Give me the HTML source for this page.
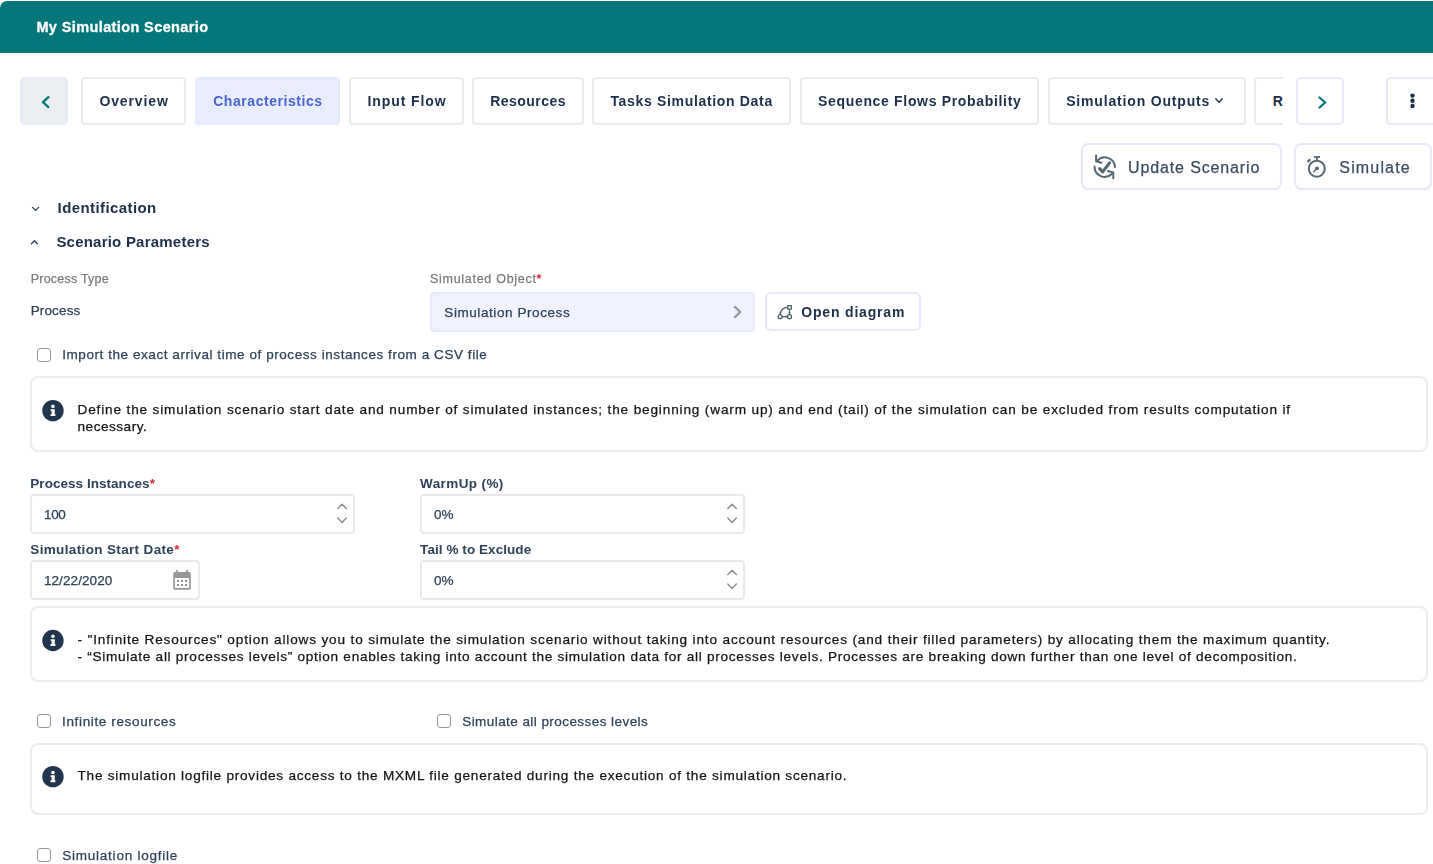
<!DOCTYPE html>
<html>
<head>
<meta charset="utf-8">
<title>My Simulation Scenario</title>
<style>
html,body{margin:0;padding:0;background:#ffffff;}
body{width:1433px;height:864px;position:relative;overflow:hidden;font-family:"Liberation Sans",sans-serif;}
.t{position:absolute;white-space:pre;line-height:1;font-family:"Liberation Sans",sans-serif;}
.b{position:absolute;box-sizing:border-box;}
.tab{position:absolute;box-sizing:border-box;top:77px;height:48px;border:2px solid #ebebeb;border-radius:4px;background:#fff;}
.info{position:absolute;box-sizing:border-box;left:30px;width:1398px;border:2px solid #ececec;border-radius:8px;background:#fff;}
.inp{position:absolute;box-sizing:border-box;border:2px solid #e9e9e9;border-radius:4px;background:#fff;}
.cb{position:absolute;box-sizing:border-box;width:14px;height:14px;border:1.7px solid #999;border-radius:3px;background:#fff;}
svg{position:absolute;overflow:visible;}
</style>
</head>
<body>
<!-- header -->
<div class="b" style="left:0;top:1px;width:1433px;height:52px;background:#057679;border-top-left-radius:7px;"></div>

<!-- tab row -->
<div class="b" style="left:20px;top:77px;width:48px;height:48px;background:#eaeef1;border:2px solid #e7eafb;border-radius:5px;"></div>
<div class="tab" style="left:81px;width:105px;"></div>
<div class="tab" style="left:195px;width:145px;background:#e9ecfc;border-color:#e6e9fb;"></div>
<div class="tab" style="left:349px;width:115px;"></div>
<div class="tab" style="left:472px;width:112px;"></div>
<div class="tab" style="left:592px;width:199px;"></div>
<div class="tab" style="left:800px;width:239px;"></div>
<div class="tab" style="left:1048px;width:198px;"></div>
<div style="position:absolute;left:1254px;top:77px;width:29px;height:48px;overflow:hidden;">
  <div class="tab" style="left:0;top:0;width:80px;"></div>
  <div class="t" style="left:18.8px;top:17.05px;font-size:14px;font-weight:700;color:#1d3049;">R</div>
</div>
<div class="b" style="left:1296px;top:77px;width:48px;height:48px;background:#fff;border:2px solid #e7eafb;border-radius:5px;"></div>
<div class="b" style="left:1386px;top:77px;width:60px;height:48px;background:#fff;border:2px solid #e7eafb;border-radius:5px;"></div>

<!-- action buttons -->
<div class="b" style="left:1081px;top:143px;width:201px;height:47px;background:#fff;border:2px solid #e6e9fb;border-radius:7px;"></div>
<div class="b" style="left:1294px;top:143px;width:138px;height:47px;background:#fff;border:2px solid #e6e9fb;border-radius:7px;"></div>

<!-- simulated object select + open diagram -->
<div class="b" style="left:430px;top:292px;width:325px;height:40px;background:#f0f3fd;border:2px solid #e5e9fa;border-radius:4px;"></div>
<div class="b" style="left:765px;top:292px;width:156px;height:39px;background:#fff;border:2px solid #e6e9fb;border-radius:6px;"></div>

<!-- checkbox import -->
<div class="cb" style="left:37px;top:348px;"></div>

<!-- info box 1 -->
<div class="info" style="top:376px;height:76px;"></div>

<!-- inputs -->
<div class="inp" style="left:30px;top:494px;width:325px;height:40px;"></div>
<div class="inp" style="left:420px;top:494px;width:325px;height:40px;"></div>
<div class="inp" style="left:30px;top:560px;width:170px;height:40px;"></div>
<div class="inp" style="left:420px;top:560px;width:325px;height:40px;"></div>

<!-- info box 2 -->
<div class="info" style="top:606px;height:76px;"></div>

<div class="cb" style="left:37px;top:714px;"></div>
<div class="cb" style="left:437px;top:714px;"></div>

<!-- info box 3 -->
<div class="info" style="top:743px;height:72px;"></div>

<div class="cb" style="left:37px;top:848px;"></div>

<!-- icons -->
<svg style="left:0;top:0" width="1433" height="864" viewBox="0 0 1433 864">
  <!-- prev chevron -->
  <polyline points="48.4,97.1 42.9,102.1 48.4,107.1" fill="none" stroke="#077677" stroke-width="2.3" stroke-linecap="round" stroke-linejoin="round"/>
  <!-- next chevron -->
  <polyline points="1319.5,97.5 1325.2,102.5 1319.5,107.5" fill="none" stroke="#077677" stroke-width="2.3" stroke-linecap="round" stroke-linejoin="round"/>
  <!-- simulation outputs chevron -->
  <polyline points="1215.8,98.8 1219,102.4 1222.2,98.8" fill="none" stroke="#1d3049" stroke-width="1.4" stroke-linecap="round" stroke-linejoin="round"/>
  <!-- more dots -->
  <circle cx="1412.5" cy="95.6" r="2.2" fill="#1d3049"/>
  <circle cx="1412.5" cy="100.8" r="2.2" fill="#1d3049"/>
  <circle cx="1412.5" cy="106" r="2.2" fill="#1d3049"/>
  <!-- identification chevron down -->
  <polyline points="32.6,207.4 35.6,210.4 38.6,207.4" fill="none" stroke="#2c4058" stroke-width="1.3" stroke-linecap="round" stroke-linejoin="round"/>
  <!-- scenario chevron up -->
  <polyline points="31.4,243.8 34.4,240.8 37.4,243.8" fill="none" stroke="#2c4058" stroke-width="1.3" stroke-linecap="round" stroke-linejoin="round"/>
  <!-- update scenario icon -->
  <g fill="none" stroke="#566870" stroke-width="2" stroke-linecap="round" stroke-linejoin="round">
    <path d="M1097.6,160.4 A10.2,10.2 0 0 1 1115,167"/>
    <path d="M1096.1,155.4 L1096.1,161.2 L1101.4,162.8"/>
    <path d="M1094.5,166.6 A10.2,10.2 0 0 0 1111.8,174"/>
    <path d="M1107.9,171 L1113.3,172.5 L1113.3,178.2"/>
  </g>
  <polyline points="1099.6,168.6 1102.6,171.8 1109.6,162.8" fill="none" stroke="#566870" stroke-width="3" stroke-linecap="round" stroke-linejoin="round"/>
  <!-- simulate stopwatch -->
  <g fill="none" stroke="#566870" stroke-linecap="butt">
    <circle cx="1316.8" cy="168.7" r="8" stroke-width="2"/>
    <line x1="1313.9" y1="157" x2="1320" y2="157" stroke-width="1.8"/>
    <line x1="1316.9" y1="157" x2="1316.9" y2="160.5" stroke-width="1.8"/>
    <line x1="1307.6" y1="161.9" x2="1310.3" y2="159.3" stroke-width="2.2"/>
  </g>
  <circle cx="1317" cy="168.3" r="1.9" fill="#566870"/>
  <line x1="1317" y1="168.3" x2="1313.8" y2="171.8" stroke="#566870" stroke-width="1.3" stroke-linecap="round"/>
  <!-- select chevron -->
  <polyline points="734.9,306.9 740.3,312 734.9,317.1" fill="none" stroke="#999999" stroke-width="2.2" stroke-linecap="round" stroke-linejoin="round"/>
  <!-- open diagram icon -->
  <g fill="none" stroke="#4f6169" stroke-width="1.3">
    <rect x="787.75" y="305.65" width="3.5" height="3.5"/>
    <circle cx="780.2" cy="316.7" r="2"/>
    <circle cx="789.5" cy="316.7" r="2"/>
    <path d="M789.5,309.8 V314.6"/>
    <path d="M782.3,316.7 H787.4"/>
    <path d="M787.1,307.4 A6.9,6.9 0 0 0 780.2,314.3"/>
  </g>
  <g fill="#4f6169">
    <path d="M785.6,315.3 L787.4,316.7 L785.6,318.1 Z"/>
    <path d="M788.1,312.6 L789.5,314.4 L790.9,312.6 Z"/>
    <path d="M778.8,312.4 L780.2,314.3 L781.6,312.4 Z"/>
  </g>
  <!-- info icons -->
  <circle cx="52.95" cy="410.60" r="10.7" fill="#21354f"/>
  <circle cx="52.95" cy="406.40" r="1.8" fill="#fff"/>
  <path d="M50.6,409.30 H54.8 V414.20 H55.4 V416.10 H50.5 V414.20 H51.6 V411.00 H50.6 Z" fill="#fff"/>
  <circle cx="52.95" cy="640.45" r="10.7" fill="#21354f"/>
  <circle cx="52.95" cy="636.25" r="1.8" fill="#fff"/>
  <path d="M50.6,639.15 H54.8 V644.05 H55.4 V645.95 H50.5 V644.05 H51.6 V640.85 H50.6 Z" fill="#fff"/>
  <circle cx="52.95" cy="776.65" r="10.7" fill="#21354f"/>
  <circle cx="52.95" cy="772.45" r="1.8" fill="#fff"/>
  <path d="M50.6,775.35 H54.8 V780.25 H55.4 V782.15 H50.5 V780.25 H51.6 V777.05 H50.6 Z" fill="#fff"/>
  <!-- spinners -->
  <g fill="none" stroke="#8a8a8a" stroke-width="1.4" stroke-linecap="round" stroke-linejoin="round">
    <polyline points="337.8,508.5 342.1,504.2 346.4,508.5"/>
    <polyline points="337.8,518.1 342.1,522.4 346.4,518.1"/>
    <polyline points="727.8,508.5 732.1,504.2 736.4,508.5"/>
    <polyline points="727.8,518.1 732.1,522.4 736.4,518.1"/>
    <polyline points="727.8,574.5 732.1,570.2 736.4,574.5"/>
    <polyline points="727.8,584.1 732.1,588.4 736.4,584.1"/>
  </g>
  <!-- calendar -->
  <g fill="#979797">
    <path fill-rule="evenodd" d="M174.7,572 H189.3 Q190.8,572 190.8,573.5 V588.2 Q190.8,589.7 189.3,589.7 H174.7 Q173.2,589.7 173.2,588.2 V573.5 Q173.2,572 174.7,572 Z M174.9,577.9 V587.9 H189.1 V577.9 Z"/>
    <rect x="176.2" y="569.9" width="1.7" height="2.6"/>
    <rect x="186.2" y="569.9" width="1.7" height="2.6"/>
  </g>
  <g fill="#8c8c8c">
    <rect x="177.1" y="580" width="1.9" height="2"/><rect x="181" y="580" width="2" height="2"/><rect x="185.1" y="580" width="1.9" height="2"/>
    <rect x="177.1" y="584" width="1.9" height="1.9"/><rect x="181" y="584" width="2" height="1.9"/><rect x="185.1" y="584" width="1.9" height="1.9"/>
  </g>
</svg>

<div style="position:absolute;left:0;top:0;width:1433px;height:864px;will-change:transform;">
<div class="t" style="left:36.4px;top:19.73px;font-size:14.5px;font-weight:700;color:#ffffff;letter-spacing:0.387px;-webkit-text-stroke:0.3px #fff">My Simulation Scenario</div>
<div class="t" style="left:99.4px;top:93.95px;font-size:14px;font-weight:700;color:#1d3049;letter-spacing:0.876px">Overview</div>
<div class="t" style="left:213.2px;top:93.95px;font-size:14px;font-weight:700;color:#4a65d0;letter-spacing:0.552px">Characteristics</div>
<div class="t" style="left:367.6px;top:93.95px;font-size:14px;font-weight:700;color:#1d3049;letter-spacing:0.891px">Input Flow</div>
<div class="t" style="left:490.3px;top:93.95px;font-size:14px;font-weight:700;color:#1d3049;letter-spacing:0.451px">Resources</div>
<div class="t" style="left:610.4px;top:93.95px;font-size:14px;font-weight:700;color:#1d3049;letter-spacing:0.673px">Tasks Simulation Data</div>
<div class="t" style="left:818.0px;top:93.95px;font-size:14px;font-weight:700;color:#1d3049;letter-spacing:0.675px">Sequence Flows Probability</div>
<div class="t" style="left:1066.2px;top:93.95px;font-size:14px;font-weight:700;color:#1d3049;letter-spacing:0.829px">Simulation Outputs</div>
<div class="t" style="left:1128.0px;top:159.66px;font-size:16px;font-weight:400;color:#3a4d61;letter-spacing:0.872px;-webkit-text-stroke:0.25px">Update Scenario</div>
<div class="t" style="left:1339.3px;top:159.66px;font-size:16px;font-weight:400;color:#3a4d61;letter-spacing:1.164px;-webkit-text-stroke:0.25px">Simulate</div>
<div class="t" style="left:57.6px;top:199.70px;font-size:15px;font-weight:700;color:#1d3049;letter-spacing:0.412px">Identification</div>
<div class="t" style="left:56.4px;top:234.40px;font-size:15px;font-weight:700;color:#1d3049;letter-spacing:0.219px">Scenario Parameters</div>
<div class="t" style="left:30.7px;top:272.52px;font-size:12.5px;font-weight:400;color:#7b7b7b;letter-spacing:0.226px;-webkit-text-stroke:0.25px">Process Type</div>
<div class="t" style="left:430.0px;top:272.52px;font-size:12.5px;font-weight:400;color:#7b7b7b;letter-spacing:0.714px;-webkit-text-stroke:0.25px">Simulated Object</div>
<div class="t" style="left:30.7px;top:304.17px;font-size:13.5px;font-weight:400;color:#2e4258;letter-spacing:0.136px;-webkit-text-stroke:0.25px">Process</div>
<div class="t" style="left:444.3px;top:305.77px;font-size:13.5px;font-weight:400;color:#2e4258;letter-spacing:0.579px;-webkit-text-stroke:0.25px">Simulation Process</div>
<div class="t" style="left:801.3px;top:305.05px;font-size:14px;font-weight:700;color:#1d3049;letter-spacing:0.814px">Open diagram</div>
<div class="t" style="left:62.2px;top:348.47px;font-size:13.5px;font-weight:400;color:#2e4258;letter-spacing:0.565px;-webkit-text-stroke:0.25px">Import the exact arrival time of process instances from a CSV file</div>
<div class="t" style="left:77.5px;top:402.99px;font-size:13.6px;font-weight:400;color:#141414;letter-spacing:0.849px;-webkit-text-stroke:0.25px">Define the simulation scenario start date and number of simulated instances; the beginning (warm up) and end (tail) of the simulation can be excluded from results computation if</div>
<div class="t" style="left:77.5px;top:419.59px;font-size:13.6px;font-weight:400;color:#141414;letter-spacing:0.507px;-webkit-text-stroke:0.25px">necessary.</div>
<div class="t" style="left:30.3px;top:476.87px;font-size:13.5px;font-weight:700;color:#2e4258;letter-spacing:0.039px">Process Instances</div>
<div class="t" style="left:420.1px;top:476.87px;font-size:13.5px;font-weight:700;color:#2e4258;letter-spacing:0.383px">WarmUp (%)</div>
<div class="t" style="left:43.9px;top:508.17px;font-size:13.5px;font-weight:400;color:#2e4258;letter-spacing:-0.266px;-webkit-text-stroke:0.25px">100</div>
<div class="t" style="left:434.0px;top:508.17px;font-size:13.5px;font-weight:400;color:#2e4258;letter-spacing:0.084px;-webkit-text-stroke:0.25px">0%</div>
<div class="t" style="left:30.3px;top:542.87px;font-size:13.5px;font-weight:700;color:#2e4258;letter-spacing:0.353px">Simulation Start Date</div>
<div class="t" style="left:420.1px;top:542.87px;font-size:13.5px;font-weight:700;color:#2e4258;letter-spacing:0.067px">Tail % to Exclude</div>
<div class="t" style="left:43.9px;top:574.17px;font-size:13.5px;font-weight:400;color:#2e4258;letter-spacing:0.091px;-webkit-text-stroke:0.25px">12/22/2020</div>
<div class="t" style="left:434.0px;top:574.17px;font-size:13.5px;font-weight:400;color:#2e4258;letter-spacing:0.084px;-webkit-text-stroke:0.25px">0%</div>
<div class="t" style="left:77.5px;top:632.99px;font-size:13.6px;font-weight:400;color:#141414;letter-spacing:0.840px;-webkit-text-stroke:0.25px">- &quot;Infinite Resources&quot; option allows you to simulate the simulation scenario without taking into account resources (and their filled parameters) by allocating them the maximum quantity.</div>
<div class="t" style="left:77.5px;top:649.59px;font-size:13.6px;font-weight:400;color:#141414;letter-spacing:0.717px;-webkit-text-stroke:0.25px">- “Simulate all processes levels” option enables taking into account the simulation data for all processes levels. Processes are breaking down further than one level of decomposition.</div>
<div class="t" style="left:62.1px;top:714.77px;font-size:13.5px;font-weight:400;color:#2e4258;letter-spacing:0.635px;-webkit-text-stroke:0.25px">Infinite resources</div>
<div class="t" style="left:462.2px;top:714.77px;font-size:13.5px;font-weight:400;color:#2e4258;letter-spacing:0.438px;-webkit-text-stroke:0.25px">Simulate all processes levels</div>
<div class="t" style="left:77.5px;top:768.69px;font-size:13.6px;font-weight:400;color:#141414;letter-spacing:0.759px;-webkit-text-stroke:0.25px">The simulation logfile provides access to the MXML file generated during the execution of the simulation scenario.</div>
<div class="t" style="left:62.2px;top:849.17px;font-size:13.5px;font-weight:400;color:#2e4258;letter-spacing:0.773px;-webkit-text-stroke:0.25px">Simulation logfile</div>
<div class="t" style="left:536.5px;top:272.52px;font-size:12.5px;font-weight:700;color:#d9283e">*</div>
<div class="t" style="left:149.8px;top:476.87px;font-size:13.5px;font-weight:700;color:#d9283e">*</div>
<div class="t" style="left:174.2px;top:542.87px;font-size:13.5px;font-weight:700;color:#d9283e">*</div>
</div>
</body>
</html>
